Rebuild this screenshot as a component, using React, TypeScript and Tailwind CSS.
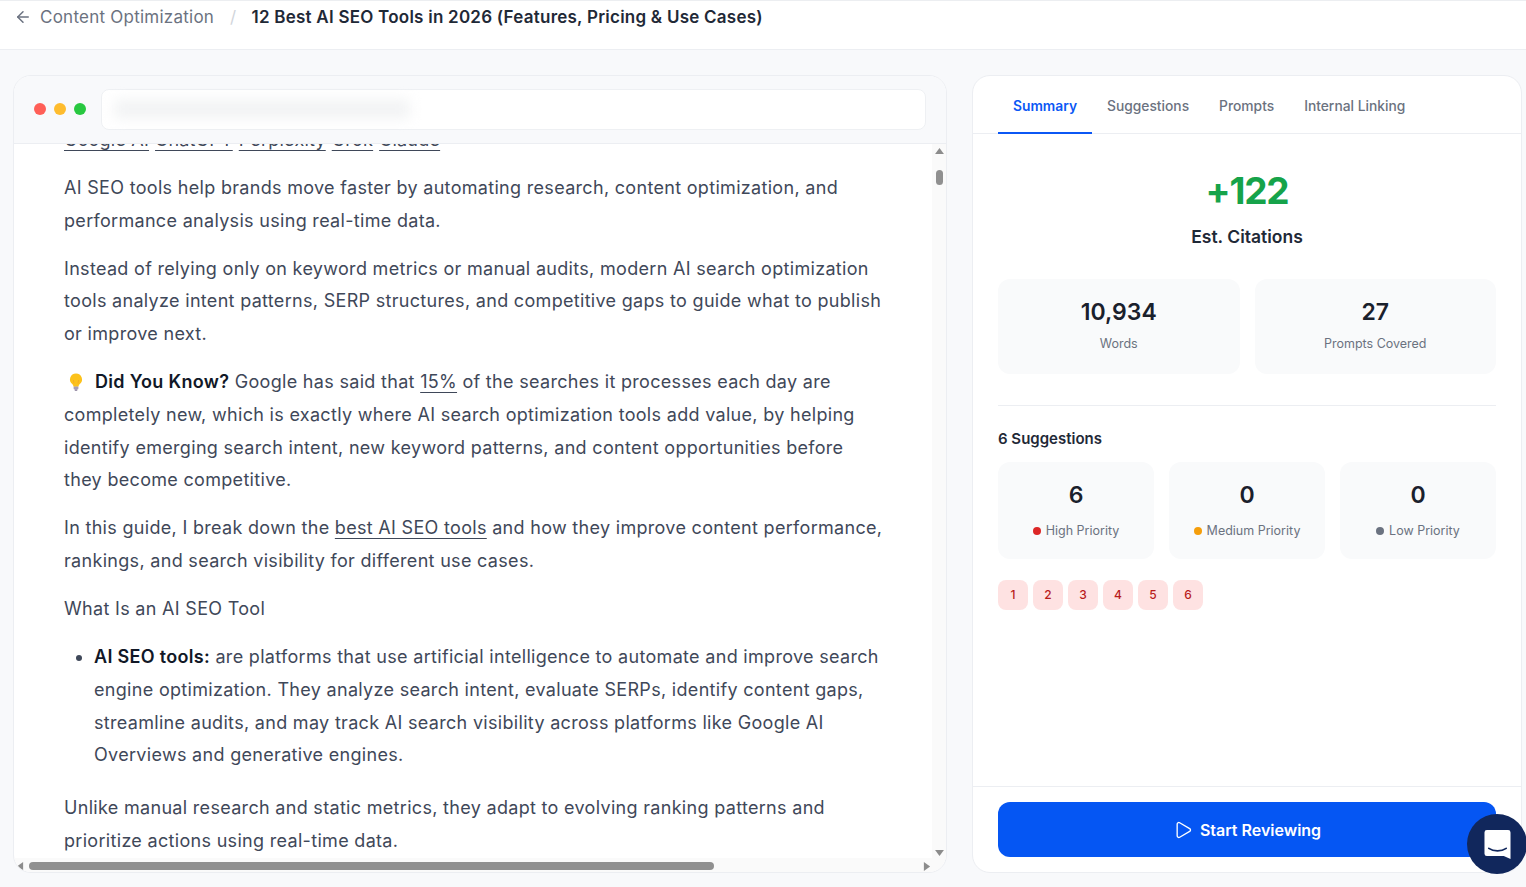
import { ArrowLeft, Play } from "lucide-react";

function Bulb() {
  return (
    <svg viewBox="0 0 16 18" className="inline-block w-[16px] h-[18px] align-[-3px] mr-[11px] ml-[4px]">
      <path d="M8 0.5a6 6 0 0 0-3.6 10.8c.8.7 1 1.5 1.1 2.4h5c.1-.9.3-1.7 1.1-2.4A6 6 0 0 0 8 .5z" fill="#fcc21b" />
      <path d="M6 10.5 5.4 7M10 10.5l.6-3.5" stroke="#f5a623" strokeWidth="0.8" fill="none" />
      <rect x="5.6" y="13.6" width="4.8" height="3" rx="1" fill="#a79db5" />
      <rect x="6.6" y="16.4" width="2.8" height="1.3" rx="0.6" fill="#7d7190" />
    </svg>
  );
}

function Tri({ dir, className }: { dir: "up" | "down" | "left" | "right"; className: string }) {
  const pts = { up: "5,1 10,8 0,8", down: "0,1 10,1 5,8", left: "8,0 8,10 1,5", right: "1,0 1,10 8,5" }[dir];
  const box = dir === "up" || dir === "down" ? "0 0 10 9" : "0 0 9 10";
  return (
    <svg viewBox={box} className={className}>
      <polygon points={pts} fill="#8c8c8c" />
    </svg>
  );
}

function StatCard({ value, label, h, gap }: { value: string; label: React.ReactNode; h: string; gap: string }) {
  return (
    <div className={`flex-1 ${h} rounded-xl bg-[#f9fafb] flex flex-col items-center`}>
      <div className="mt-[17px] text-[23px] leading-[32px] font-semibold text-[#1a202c]">{value}</div>
      <div className={`${gap} text-[12.5px] leading-[18px] text-[#6b7280] flex items-center`}>{label}</div>
    </div>
  );
}

export default function App() {
  const font = { fontFamily: "Inter, 'Liberation Sans', sans-serif" };
  return (
    <div style={font} className="w-[1526px] h-[887px] overflow-hidden bg-[#f8f9fb] relative [font-optical-sizing:none]">
      <header className="h-[50px] bg-white border-t border-t-[#eceef1] border-b border-b-[#eceef2] flex items-start pl-[14px] pt-[5px] tracking-[0.24px]">
        <ArrowLeft size={18} strokeWidth={2} className="text-[#6b7280] mt-[2px]" />
        <span className="ml-[8px] text-[17px] leading-[22px] text-[#6b7280]">Content Optimization</span>
        <span className="ml-[16px] text-[17px] leading-[22px] text-[#d1d5db]">/</span>
        <span className="ml-[15px] text-[17px] leading-[22px] font-semibold text-[#1f2937]">
          12 Best AI SEO Tools in 2026 (Features, Pricing &amp; Use Cases)
        </span>
      </header>

      <main className="flex gap-[25px] pl-[13px] pt-[25px]">
        <section className="w-[934px] h-[798px] bg-white border border-[#eceef2] rounded-[18px] overflow-hidden flex flex-col">
          <div className="h-[68px] shrink-0 bg-[#f8f9fb] border-b border-[#eceef2] flex items-center pl-[20px] pb-[1px]">
            <span className="w-[12px] h-[12px] rounded-full bg-[#ff5f57]" />
            <span className="w-[12px] h-[12px] rounded-full bg-[#febc2e] ml-[8px]" />
            <span className="w-[12px] h-[12px] rounded-full bg-[#28c840] ml-[8px]" />
            <div className="ml-[15px] w-[825px] h-[41px] bg-white border border-[#eef0f3] rounded-lg flex items-center pl-[12px]">
              <div className="w-[296px] h-[20px] bg-[#f3f4f5] blur-[6px] rounded" />
            </div>
          </div>

          <div className="flex-1 min-h-0 flex">
            <div className="flex-1 min-w-0 flex flex-col">
              <div className="flex-1 min-h-0 overflow-hidden pl-[50px] pr-[49px]">
                <div className="-mt-[20.15px] text-[18px] leading-[32.65px] tracking-[0.31px] text-[#3f4859]">
                  <p className="mb-[15.5px] flex gap-[6px] tracking-[0.2px]">
                    <span className="underline underline-offset-[4px]">Google AI</span>
                    <span className="underline underline-offset-[4px]">ChatGPT</span>
                    <span className="underline underline-offset-[4px]">Perplexity</span>
                    <span className="underline underline-offset-[4px]">Grok</span>
                    <span className="underline underline-offset-[4px]">Claude</span>
                  </p>
                  <p className="mb-[15.5px]">
                    AI SEO tools help brands move faster by automating research, content optimization, and performance analysis using real-time data.
                  </p>
                  <p className="mb-[15.5px]">
                    Instead of relying only on keyword metrics or manual audits, modern AI search optimization tools analyze intent patterns, SERP structures, and competitive gaps to guide what to publish or improve next.
                  </p>
                  <p className="mb-[15.5px]">
                    <Bulb />
                    <strong className="font-semibold text-[#111827]">Did You Know?</strong> Google has said that{" "}
                    <span className="underline underline-offset-[4px]">15%</span> of the searches it processes each day are completely new, which is exactly where AI search optimization tools add value, by helping identify emerging search intent, new keyword patterns, and content opportunities before they become competitive.
                  </p>
                  <p className="mb-[15.5px]">
                    In this guide, I break down the <span className="underline underline-offset-[4px]">best AI SEO tools</span> and how they improve content performance, rankings, and search visibility for different use cases.
                  </p>
                  <p className="mb-[15.5px]">What Is an AI SEO Tool</p>
                  <ul className="list-disc pl-[30px] mb-[20.1px]">
                    <li>
                      <strong className="font-semibold text-[#111827]">AI SEO tools:</strong> are platforms that use artificial intelligence to automate and improve search engine optimization. They analyze search intent, evaluate SERPs, identify content gaps, streamline audits, and may track AI search visibility across platforms like Google AI Overviews and generative engines.
                    </li>
                  </ul>
                  <p>
                    Unlike manual research and static metrics, they adapt to evolving ranking patterns and prioritize actions using real-time data.
                  </p>
                </div>
              </div>
              <div className="h-[14px] shrink-0 bg-[#fafafa] flex items-center pl-[2px] pr-[1px] pt-[2px]">
                <Tri dir="left" className="w-[8px] h-[9px]" />
                <div className="ml-[5px] w-[685px] h-[8px] rounded-full bg-[#909090]" />
                <div className="flex-1" />
                <Tri dir="right" className="w-[8px] h-[9px]" />
              </div>
            </div>
            <div className="w-[14px] shrink-0 bg-[#fafafa] flex flex-col items-center pt-[3px] pb-[15px]">
              <Tri dir="up" className="w-[9px] h-[8px]" />
              <div className="mt-[15px] w-[7px] h-[15px] rounded-full bg-[#909090]" />
              <div className="flex-1" />
              <Tri dir="down" className="w-[9px] h-[8px]" />
            </div>
          </div>
        </section>

        <section className="w-[550px] h-[798px] bg-white border border-[#eceef2] rounded-[18px] flex flex-col">
          <nav className="h-[58px] shrink-0 border-b border-[#eceef2] flex pl-[25px] text-[13.8px] font-medium text-[#6b7280]">
            <span className="h-[58px] px-[15px] pt-[20px] leading-[20px] font-semibold text-[#0b57f5] border-b-2 border-[#0b57f5]">Summary</span>
            <span className="px-[15px] pt-[20px] leading-[20px]">Suggestions</span>
            <span className="px-[15px] pt-[20px] leading-[20px]">Prompts</span>
            <span className="px-[15px] pt-[20px] leading-[20px]">Internal Linking</span>
          </nav>

          <div className="flex-1 px-[25px]">
            <div className="mt-[35px] text-center text-[37px] leading-[44px] font-bold tracking-[-1.2px] text-[#16a34a]">+122</div>
            <div className="mt-[12px] text-center text-[17.5px] leading-[24px] font-semibold text-[#1f2937]">Est. Citations</div>

            <div className="mt-[30px] flex gap-[15px]">
              <StatCard h="h-[95px]" gap="mt-[7px]" value="10,934" label="Words" />
              <StatCard h="h-[95px]" gap="mt-[7px]" value="27" label="Prompts Covered" />
            </div>

            <div className="mt-[31px] border-t border-[#eceef2]" />
            <div className="mt-[23px] text-[15px] leading-[20px] font-semibold text-[#1f2937]">6 Suggestions</div>

            <div className="mt-[13px] flex gap-[15px]">
              <StatCard h="h-[97px]" gap="mt-[11px]" value="6" label={<><span className="w-[8px] h-[8px] rounded-full bg-[#dc2626] mr-[5px]" />High Priority</>} />
              <StatCard h="h-[97px]" gap="mt-[11px]" value="0" label={<><span className="w-[8px] h-[8px] rounded-full bg-[#f59e0b] mr-[5px]" />Medium Priority</>} />
              <StatCard h="h-[97px]" gap="mt-[11px]" value="0" label={<><span className="w-[8px] h-[8px] rounded-full bg-[#6b7280] mr-[5px]" />Low Priority</>} />
            </div>

            <div className="mt-[21px] flex gap-[5px]">
              {["1", "2", "3", "4", "5", "6"].map((n) => (
                <span key={n} className="w-[30px] h-[30px] rounded-lg bg-[#fee2e2] text-[#b91c1c] text-[12px] font-medium flex items-center justify-center">
                  {n}
                </span>
              ))}
            </div>
          </div>

          <div className="h-[86px] shrink-0 border-t border-[#eceef2] px-[25px] pt-[15px]">
            <button className="w-full h-[55px] rounded-xl bg-[#0556f3] text-white text-[16px] font-semibold flex items-center justify-center gap-[7px]">
              <Play size={20} strokeWidth={1.6} />
              Start Reviewing
            </button>
          </div>
        </section>
      </main>

      <div className="absolute left-[1467px] top-[814px] w-[60px] h-[60px] rounded-full bg-[#11275c] flex items-center justify-center">
        <svg viewBox="0 0 28 32" className="w-[27px] h-[31px]">
          <path d="M3 1h22a2.500 2.500 0 0 1 2.500 2.500V31l-7-3H3a2.500 2.500 0 0 1-2.500-2.500v-22A2.500 2.500 0 0 1 3 1z" fill="#fff" />
          <path d="M5 20c5 3.500 13 3.500 18 0" stroke="#11275c" strokeWidth="1.800" fill="none" strokeLinecap="round" />
        </svg>
      </div>
    </div>
  );
}
